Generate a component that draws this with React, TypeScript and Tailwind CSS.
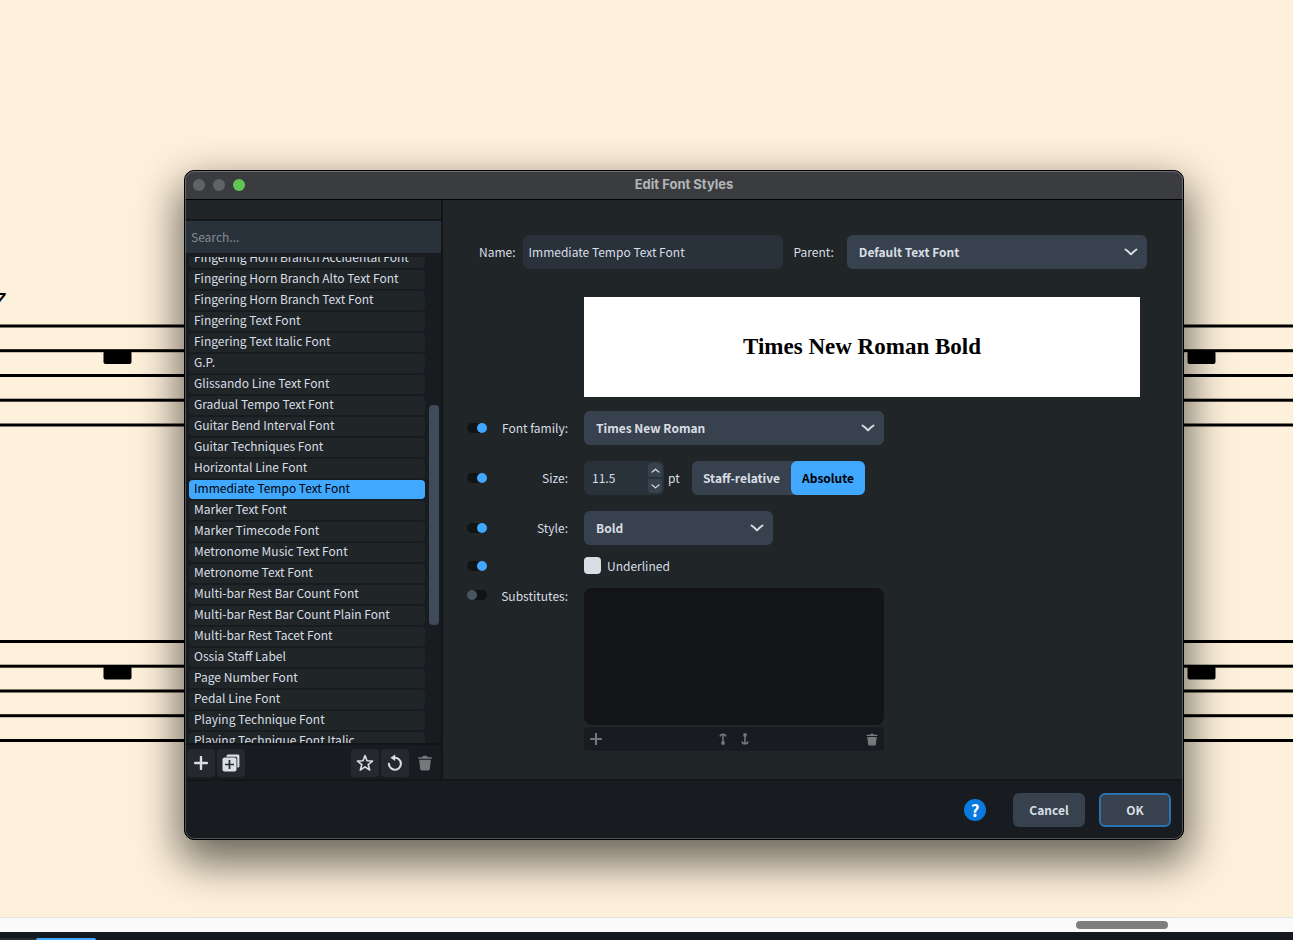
import { ReactNode, useState } from 'react';

const FONT_STYLES = [
  'Fingering Horn Branch Accidental Font',
  'Fingering Horn Branch Alto Text Font',
  'Fingering Horn Branch Text Font',
  'Fingering Text Font',
  'Fingering Text Italic Font',
  'G.P.',
  'Glissando Line Text Font',
  'Gradual Tempo Text Font',
  'Guitar Bend Interval Font',
  'Guitar Techniques Font',
  'Horizontal Line Font',
  'Immediate Tempo Text Font',
  'Marker Text Font',
  'Marker Timecode Font',
  'Metronome Music Text Font',
  'Metronome Text Font',
  'Multi-bar Rest Bar Count Font',
  'Multi-bar Rest Bar Count Plain Font',
  'Multi-bar Rest Tacet Font',
  'Ossia Staff Label',
  'Page Number Font',
  'Pedal Line Font',
  'Playing Technique Font',
  'Playing Technique Font Italic',
];

const STAFF_TOPS = [326, 641.5];
const REST_POSITIONS = [103, 1187];

function Score() {
  return (
    <svg className="absolute inset-0 h-full w-full" aria-hidden="true">
      <text
        x="-10"
        y="312"
        fontSize="27"
        fontStyle="italic"
        fontFamily="Liberation Sans, sans-serif"
      >
        7
      </text>
      {STAFF_TOPS.map(top => (
        <g key={top}>
          {[0, 24.7, 49.5, 74.2, 99].map(offset => (
            <rect
              key={offset}
              x="0"
              y={top + offset - 1.5}
              width="100%"
              height="3"
            />
          ))}
          {REST_POSITIONS.map(x => (
            <rect key={x} x={x + 0.5} y={top + 25} width="28" height="13" rx="2" />
          ))}
        </g>
      ))}
    </svg>
  );
}

function PlusIcon({ className }: { className: string }) {
  return (
    <svg viewBox="0 0 14 14" className={className} aria-hidden="true">
      <path d="M7 1v12M1 7h12" stroke="currentColor" strokeWidth="2.4" strokeLinecap="round" />
    </svg>
  );
}

function DuplicateIcon() {
  return (
    <svg viewBox="0 0 18 18" className="size-[18px]" aria-hidden="true">
      <path
        d="M4.500 2.200C4.500 1.200 5.200.6 6.200.6h9.600c1 0 1.600.6 1.600 1.600v9.800c0 1-.6 1.600-1.600 1.600h-.5V4.400c0-1-.7-1.700-1.700-1.700H4.500z"
        fill="currentColor"
      />
      <rect x=".5" y="3.5" width="14" height="14" rx="2" fill="currentColor" />
      <path d="M7.500 6v9M3 10.500h9" stroke="#25282d" strokeWidth="1.700" />
    </svg>
  );
}

function StarIcon() {
  return (
    <svg viewBox="0 0 18 18" className="size-[18px]" aria-hidden="true">
      <path
        d="M9 1.600l2 5.200 5.500.300-4.300 3.500 1.500 5.400L9 12.900l-4.700 3.100 1.500-5.400L1.500 7.100 7 6.800z"
        fill="none"
        stroke="currentColor"
        strokeWidth="1.600"
        strokeLinejoin="round"
      />
    </svg>
  );
}

function ResetIcon() {
  return (
    <svg viewBox="0 0 18 18" className="size-[18px]" aria-hidden="true">
      <path
        d="M8.500 3.800a6 6 0 1 1-5.600 6"
        fill="none"
        stroke="currentColor"
        strokeWidth="2.100"
        strokeLinecap="round"
      />
      <path d="M9.200.600v6.400L4.400 3.800z" fill="currentColor" />
    </svg>
  );
}

function TrashIcon({ className }: { className: string }) {
  return (
    <svg viewBox="0 0 14 16" className={className} aria-hidden="true">
      <path
        d="M.200 2.200h4.200c.2-.9.700-1.400 1.500-1.400h2.200c.8 0 1.300.5 1.500 1.400h4.200v1.600H.200z"
        fill="currentColor"
      />
      <path d="M1.200 4.800h11.600l-1 9.200c-.1.900-.6 1.400-1.500 1.400H3.700c-.9 0-1.400-.5-1.500-1.400z" fill="currentColor" />
    </svg>
  );
}

function MoveIcon({ down = false }: { down?: boolean }) {
  return (
    <svg
      viewBox="0 0 8 12"
      className={down ? 'h-3 w-2 rotate-180' : 'h-3 w-2'}
      aria-hidden="true"
    >
      <path
        d="M4 1v9M1 3.500Q1.500 1.200 4 1.200T7 3.500"
        fill="none"
        stroke="currentColor"
        strokeWidth="1.500"
      />
      <circle cx="4" cy="10" r="1.900" fill="currentColor" />
    </svg>
  );
}

function ChevronIcon({ className }: { className: string }) {
  return (
    <svg viewBox="0 0 14 8" className={className} aria-hidden="true">
      <path
        d="M1.500 1.500Q4.500 3.500 7 6.300 9.500 3.500 12.500 1.500"
        fill="none"
        stroke="currentColor"
        strokeWidth="2"
        strokeLinecap="round"
        strokeLinejoin="round"
      />
    </svg>
  );
}

interface SelectProps {
  id: string;
  options: string[];
  className: string;
}

function Select({ id, options, className }: SelectProps) {
  return (
    <div className={`relative ${className}`}>
      <select
        id={id}
        className="h-[34px] w-full appearance-none rounded-md bg-[#38424e] px-3 font-bold"
      >
        {options.map(option => (
          <option key={option}>{option}</option>
        ))}
      </select>
      <ChevronIcon className="pointer-events-none absolute top-[13px] right-[9px] h-2 w-3.5" />
    </div>
  );
}

function Toggle({ label, defaultChecked }: { label: string; defaultChecked?: boolean }) {
  return (
    <label className="flex h-[34px] w-5 shrink-0 items-center">
      <input
        type="checkbox"
        role="switch"
        aria-label={label}
        defaultChecked={defaultChecked}
        className="peer sr-only"
      />
      <span className="flex h-2.5 w-5 rounded-full bg-[#121315] before:size-2.5 before:rounded-full before:bg-[#4a5563] peer-checked:justify-end peer-checked:before:bg-[#40a9ff]" />
    </label>
  );
}

function ToolButton({ label, children }: { label: string; children: ReactNode }) {
  return (
    <button
      type="button"
      aria-label={label}
      className="flex size-7 items-center justify-center rounded bg-[#25292e]"
    >
      {children}
    </button>
  );
}

interface FieldProps {
  label: string;
  htmlFor?: string;
  children: ReactNode;
}

function Field({ label, htmlFor, children }: FieldProps) {
  return (
    <div className="flex items-center">
      <Toggle label={`Override ${label}`} defaultChecked />
      <label htmlFor={htmlFor} className="mr-4 w-[81px] shrink-0 text-right">
        {label}:
      </label>
      {children}
    </div>
  );
}

function Sidebar() {
  const [selected, setSelected] = useState('Immediate Tempo Text Font');
  const [search, setSearch] = useState('');

  const items = FONT_STYLES.filter(name =>
    name.toLowerCase().includes(search.toLowerCase()),
  );

  return (
    <aside className="flex w-64 shrink-0 flex-col bg-[#181c20]">
      <div className="h-5 shrink-0 border-b border-[#131517] bg-[#202528]" />
      <input
        type="search"
        aria-label="Search"
        placeholder="Search..."
        value={search}
        onChange={e => setSearch(e.target.value)}
        className="mt-px h-8 shrink-0 bg-[#29313b] px-1.5 pb-0.5 outline-none placeholder:text-[#848a93]"
      />
      <div className="mt-1 flex min-h-0 flex-1 basis-0 overflow-hidden">
        <ul className="-mt-2 flex-1 space-y-0.5 pl-1">
          {items.map(name => (
            <li key={name}>
              <button
                type="button"
                onClick={() => setSelected(name)}
                className={
                  name === selected
                    ? 'flex h-[19px] w-full rounded-sm bg-[#40a9ff] px-[5px] leading-4 whitespace-nowrap text-black'
                    : 'flex h-[19px] w-full rounded-sm bg-[#202528] px-[5px] leading-4 whitespace-nowrap'
                }
              >
                {name}
              </button>
            </li>
          ))}
        </ul>
        <div className="w-4 pt-[148px] pl-1">
          <div className="h-[220px] w-2.5 rounded bg-[#3f4b58]" />
        </div>
      </div>
      <div className="flex h-9 shrink-0 items-end gap-0.5 border-t-2 border-[#131517] px-0.5 pb-0.5">
        <ToolButton label="New">
          <PlusIcon className="size-3.5" />
        </ToolButton>
        <ToolButton label="Duplicate">
          <DuplicateIcon />
        </ToolButton>
        <div className="flex-1" />
        <ToolButton label="Save as Default">
          <StarIcon />
        </ToolButton>
        <ToolButton label="Revert to Factory">
          <ResetIcon />
        </ToolButton>
        <button
          type="button"
          aria-label="Delete"
          disabled
          className="flex size-7 items-center justify-center text-[#75787b]"
        >
          <TrashIcon className="h-4 w-3.5" />
        </button>
      </div>
    </aside>
  );
}

function StyleForm() {
  const [mode, setMode] = useState('Absolute');

  return (
    <main className="min-w-0 flex-1 border-l-2 border-[#131517] bg-[#202528] pt-[35px] pb-7">
      <div className="flex items-center pr-9 pl-9">
        <label htmlFor="name" className="mr-[7px]">
          Name:
        </label>
        <input
          id="name"
          type="text"
          defaultValue="Immediate Tempo Text Font"
          className="h-[34px] w-[260px] rounded-md bg-[#29313b] px-1.5 pb-0.5 outline-none"
        />
        <label htmlFor="parent" className="mr-[13px] ml-[11px]">
          Parent:
        </label>
        <Select id="parent" options={['Default Text Font']} className="flex-1" />
      </div>

      <div className="mt-7 mr-[43px] ml-[141px] flex h-[100px] items-center justify-center bg-white">
        <p className="font-['Liberation_Serif',serif] text-[23px] font-bold text-black">
          Times New Roman Bold
        </p>
      </div>

      <div className="mt-3.5 space-y-4 pl-6">
        <Field label="Font family" htmlFor="family">
          <Select id="family" options={['Times New Roman']} className="w-[300px]" />
        </Field>

        <Field label="Size" htmlFor="size">
          <div className="flex h-[34px] w-20 rounded-md bg-[#29313b] p-0.5">
            <input
              id="size"
              type="text"
              defaultValue="11.5"
              className="min-w-0 flex-1 px-1.5 outline-none"
            />
            <div className="flex w-3.5 flex-col gap-0.5">
              <button
                type="button"
                aria-label="Increase"
                className="flex flex-1 items-center justify-center rounded-t bg-[#38424e]"
              >
                <ChevronIcon className="h-[5px] w-[9px] rotate-180" />
              </button>
              <button
                type="button"
                aria-label="Decrease"
                className="flex flex-1 items-center justify-center rounded-b bg-[#38424e]"
              >
                <ChevronIcon className="h-[5px] w-[9px]" />
              </button>
            </div>
          </div>
          <span className="ml-1 w-6">pt</span>
          <div className="flex rounded-md bg-[#38424e]">
            {['Staff-relative', 'Absolute'].map(option => (
              <button
                key={option}
                type="button"
                onClick={() => setMode(option)}
                className={
                  option === mode
                    ? 'h-[34px] rounded-md bg-[#40a9ff] px-[11px] font-bold text-black'
                    : 'h-[34px] rounded-md px-[11px] font-bold'
                }
              >
                {option}
              </button>
            ))}
          </div>
        </Field>

        <Field label="Style" htmlFor="style">
          <Select id="style" options={['Bold']} className="w-[189px]" />
        </Field>
      </div>

      <div className="mt-1 flex items-center pl-6">
        <Toggle label="Override Underlined" defaultChecked />
        <label className="ml-[97px] flex items-center gap-1.5 pb-px">
          <input
            type="checkbox"
            className="size-[17px] appearance-none rounded bg-[#d9dee5] checked:bg-[#40a9ff]"
          />
          Underlined
        </label>
      </div>

      <div className="mt-[5px] flex items-start pl-6">
        <div className="-mt-2.5">
          <Toggle label="Override Substitutes" />
        </div>
        <span className="mr-4 w-[81px] text-right leading-4">Substitutes:</span>
        <div className="w-[300px]">
          <div className="h-[137px] rounded-lg bg-[#131416]" />
          <div className="mt-0.5 flex h-6 items-center rounded bg-[#181c20] px-1.5 text-[#75787b]">
            <button type="button" aria-label="Add substitute">
              <PlusIcon className="size-3" />
            </button>
            <div className="flex flex-1 justify-center gap-3.5">
              <button type="button" aria-label="Move up">
                <MoveIcon />
              </button>
              <button type="button" aria-label="Move down">
                <MoveIcon down />
              </button>
            </div>
            <button type="button" aria-label="Remove substitute">
              <TrashIcon className="h-[13px] w-3" />
            </button>
          </div>
        </div>
      </div>
    </main>
  );
}

function FontStylesDialog() {
  return (
    <div
      role="dialog"
      aria-labelledby="dialog-title"
      className="absolute top-[170px] right-[109px] left-[184px] overflow-hidden rounded-[10px] border border-black bg-[#181c20] text-[12px] text-[#d9dee5] shadow-[0_18px_44px_4px_rgba(0,0,0,0.6)]"
    >
      <header className="flex h-[29px] items-center border-b border-black bg-[#3a3c40] px-2">
        <div className="flex w-16 gap-2">
          <span className="size-3 rounded-full bg-[#616266]" />
          <span className="size-3 rounded-full bg-[#616266]" />
          <span className="size-3 rounded-full bg-[#61c554]" />
        </div>
        <h1
          id="dialog-title"
          className="flex-1 pr-16 text-center font-[Inter,sans-serif] text-[13px] font-bold text-[#b4b5b7]"
        >
          Edit Font Styles
        </h1>
      </header>

      <div className="flex">
        <Sidebar />
        <StyleForm />
      </div>

      <footer className="flex h-[60px] items-center justify-end border-t-2 border-[#131517] pr-3 pb-px">
        <button
          type="button"
          aria-label="Help"
          className="mr-[27px] flex size-[22px] items-center justify-center rounded-full bg-[#0a7ade] text-[17px] font-bold text-white"
        >
          ?
        </button>
        <button type="button" className="mr-3.5 h-[34px] w-[72px] rounded-md bg-[#38424e] font-bold">
          Cancel
        </button>
        <button
          type="button"
          className="h-[34px] w-[72px] rounded-md border-2 border-[#2a73ae] bg-[#38424e] font-bold"
        >
          OK
        </button>
      </footer>
      <div className="pointer-events-none absolute inset-0 rounded-[9px] border border-white/25" />
    </div>
  );
}

export default function App() {
  return (
    <div className="relative flex h-screen flex-col overflow-hidden bg-[#fef1db] font-['Noto_Sans_CJK_SC',sans-serif]">
      <div className="relative flex-1">
        <Score />
        <FontStylesDialog />
      </div>
      <div className="flex h-[15px] justify-end border-t border-[#e4e4e4] bg-[#fafafa] pt-[3px] pr-[125px]">
        <div className="h-2 w-[92px] rounded-full bg-[#7e7e7e]" />
      </div>
      <div className="flex h-2 items-end bg-[#15191e]">
        <div className="h-0.5 w-9 bg-[#252b33]" />
        <div className="h-0.5 w-[60px] rounded-t bg-[#40a9ff]" />
      </div>
    </div>
  );
}
